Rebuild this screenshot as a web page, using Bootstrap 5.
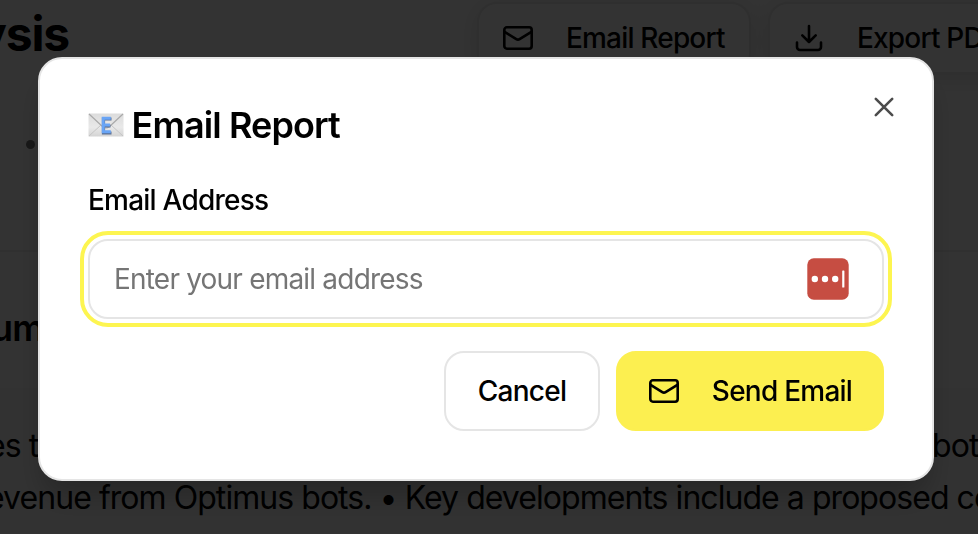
<!DOCTYPE html>
<html lang="en">
<head>
<meta charset="utf-8">
<meta name="viewport" content="width=device-width, initial-scale=1">
<title>Email Report</title>
<link href="https://cdn.jsdelivr.net/npm/bootstrap@5.3.0/dist/css/bootstrap.min.css" rel="stylesheet">
<style>
body{font-family:Inter,"Liberation Sans",sans-serif;font-size:28px;color:#000;background:#fff;height:534px;overflow:hidden;letter-spacing:-.78px}
.report-page{height:534px;overflow:hidden}
.report-head{height:248px;padding-top:2px;border-bottom:2px solid #f0f0f0;box-sizing:content-box}
.report-title{font-size:48px;font-weight:700;line-height:64px;letter-spacing:-.025em;width:477px;flex:none;margin:0;text-indent:-22px}
.tool-row{gap:17px}
.tool-btn{height:72px;border:2px solid #e8e8e8;border-radius:20px;font-size:28px;font-weight:500;color:#000;padding:0 23px;white-space:nowrap;flex:none;background:#fff;letter-spacing:-.82px;box-shadow:0 4px 24px rgba(0,0,0,.12)}
.tool-btn:first-child{width:274px}
.tool-btn svg,.send-btn svg{margin-right:32px;flex:none}
.meta-dot{width:9px;height:9px;border-radius:50%;background:#777;margin:66px 0 0 26px}
.section-title{font-size:36px;font-weight:600;line-height:44px;letter-spacing:-.025em;padding-top:54px;height:136px;margin:0;text-indent:-9px}
.summary-box{background:#f8f8f8;height:145px;padding-top:32px;font-size:32px;line-height:52px;letter-spacing:-.95px;white-space:nowrap}
.line-a{margin-left:-13px}
.line-a span:last-child{margin-left:auto;width:46px}
.line-b{margin-left:-14px}
.scrim{background:rgba(0,0,0,.8)}
.dialog-box{width:896px;height:424px;margin:57px 0 0 38px;border:2px solid #e5e5e5;border-radius:24px;padding:48px;box-shadow:0 20px 30px -6px rgba(0,0,0,.25)}
.dialog-title{font-size:36px;font-weight:600;line-height:36px;letter-spacing:-.025em;gap:7.5px;margin-bottom:39px}
.close-x{right:32px;top:32px;width:32px;height:32px;color:#4c4c4c}
.field-label{font-size:28px;font-weight:500;line-height:36px;margin-bottom:21px}
.email-field{height:80px;border:2px solid #e5e5e5;border-radius:20px;padding:0 33px 0 24px;outline:4px solid #fdf550;outline-offset:4px;margin-bottom:32px}
.email-field input{border:0;padding:0;font-size:28px;color:#000;background:none;box-shadow:none!important;letter-spacing:-.8px}
.email-field input::placeholder{color:#757575;opacity:1}
.act-btn{height:80px;border:2px solid #e5e5e5;border-radius:20px;font-size:28px;font-weight:500;color:#000;padding:0;letter-spacing:-.76px}
.cancel-btn{width:156px;background:#fff}
.send-btn{width:268px;background:#fcef50;border-color:#fcef50}
</style>
</head>
<body>
<svg class="d-none" xmlns="http://www.w3.org/2000/svg">
<symbol id="mail" viewBox="0 0 32 32"><g fill="none" stroke="currentColor" stroke-width="2.6" stroke-linecap="round" stroke-linejoin="round"><rect x="2.3" y="5.3" width="27.4" height="21.4" rx="2.6"/><path d="m2.6 9.8 11.7 7.3a3 3 0 0 0 3.3 0l11.8-7.3"/></g></symbol>
</svg>
<main class="report-page">
  <header class="report-head">
    <div class="d-flex">
      <h1 class="report-title">ysis</h1>
      <div class="d-flex tool-row">
        <button class="btn tool-btn d-flex align-items-center"><svg width="32" height="32"><use href="#mail"/></svg>Email Report</button>
        <button class="btn tool-btn d-flex align-items-center"><svg width="32" height="32" viewBox="0 0 32 32" fill="none" stroke="currentColor" stroke-width="2.6" stroke-linecap="round" stroke-linejoin="round"><path d="M16 4v16m-6.7-6.7L16 20l6.7-6.7M4 20.5V25a3 3 0 0 0 3 3h18a3 3 0 0 0 3-3v-4.5"/></svg>Export PDF</button>
      </div>
    </div>
    <div class="meta-dot"></div>
  </header>
  <h2 class="section-title">um</h2>
  <div class="summary-box">
    <div class="line-a d-flex"><span>es t</span><span>bot</span></div>
    <div class="line-b">evenue from Optimus bots. • Key developments include a proposed co</div>
  </div>
</main>
<div class="scrim position-fixed top-0 start-0 w-100 h-100">
  <section class="dialog-box bg-white position-relative" role="dialog" aria-labelledby="dialogTitle">
    <h2 class="dialog-title d-flex align-items-center" id="dialogTitle">
      <svg width="36" height="24" viewBox="0 0 36 24" aria-hidden="true">
        <defs><linearGradient id="paper" x2="0" y2="1"><stop stop-color="#dcdcdc"/><stop offset=".6" stop-color="#e9e9e9"/><stop offset="1" stop-color="#d4d4d4"/></linearGradient></defs>
        <rect x=".5" y=".5" width="35" height="23" rx=".6" fill="url(#paper)"/>
        <path d="m1 23 12-11m22 11L23 12" stroke="#c5c5c5" fill="none"/>
        <path d="m1 1 14 13q3 2 6 0L35 1" stroke="#aaa" stroke-width="1.2" fill="none"/>
        <path d="M23.5 6h-8v14h8M15 13h7.5" stroke="#5a6f92" stroke-width="3.2" fill="none"/>
        <path d="M22.8 5.3h-7.6v13.5h7.6M15 12h7" stroke="#69a5f6" stroke-width="3" fill="none"/>
      </svg>
      <span>Email Report</span>
    </h2>
    <button type="button" class="close-x btn p-0 border-0 position-absolute d-flex" aria-label="Close"><svg width="32" height="32" viewBox="0 0 32 32" stroke="currentColor" stroke-width="2.6" stroke-linecap="round"><path d="m7.8 7.8 16.4 16.4m0-16.4L7.8 24.2"/></svg></button>
    <label class="field-label d-block" for="email">Email Address</label>
    <div class="email-field d-flex align-items-center">
      <input class="form-control" type="email" id="email" placeholder="Enter your email address">
      <svg class="flex-shrink-0" width="42" height="42" viewBox="0 0 42 42" fill="#fff"><rect x=".3" y=".3" width="41.4" height="41.4" rx="6.5" fill="#c64d42"/><circle cx="7.8" cy="21" r="3.2"/><circle cx="18" cy="21" r="3.2"/><circle cx="28.2" cy="21" r="3.2"/><rect x="35.2" y="12.5" width="2.2" height="17" rx=".6"/></svg>
    </div>
    <div class="d-flex justify-content-end gap-3">
      <button type="button" class="btn act-btn cancel-btn">Cancel</button>
      <button type="button" class="btn act-btn send-btn d-flex align-items-center justify-content-center"><svg width="32" height="32"><use href="#mail"/></svg>Send Email</button>
    </div>
  </section>
</div>
<script src="https://cdn.jsdelivr.net/npm/bootstrap@5.3.0/dist/js/bootstrap.bundle.min.js"></script>
</body>
</html>
